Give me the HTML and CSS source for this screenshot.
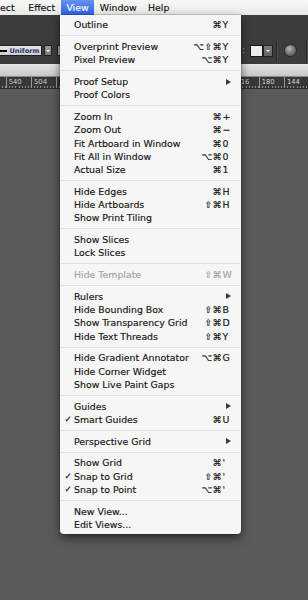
FILE: index.html
```html
<!DOCTYPE html>
<html>
<head>
<meta charset="utf-8">
<link rel="stylesheet" href="styles.css">
</head>
<body>
<div class="screen">
  <div class="menubar">
    <span class="mb-item first">ect</span>
    <span class="mb-item">Effect</span>
    <span class="mb-item active">View</span>
    <span class="mb-item">Window</span>
    <span class="mb-item">Help</span>
  </div>
  <div class="toolbar">
    <div class="ctl-row">
      <div class="combo"><span class="stroke-line"></span><span class="combo-text">Uniform</span></div>
      <div class="dd"><span class="dd-arrow"></span></div>
      <div class="combo2"></div>
      <div class="right-group">
        <span class="colon">:</span>
        <div class="swatch"></div>
        <div class="dd dd-dark"><span class="dd-arrow"></span></div>
        <div class="vdiv"></div>
        <div class="globe"></div>
        <div class="vdiv"></div>
      </div>
    </div>
  </div>
  <div class="tabstrip"></div>
  <div class="ruler">
    <span class="seg lead"></span>
    <span class="seg"><span class="lbl">540</span></span>
    <span class="seg"><span class="lbl">504</span></span>
    <span class="seg"></span>
    <span class="seg"></span>
    <span class="seg"></span>
    <span class="seg"></span>
    <span class="seg"></span>
    <span class="seg"></span>
    <span class="seg"></span>
    <span class="seg"><span class="lbl">216</span></span>
    <span class="seg"><span class="lbl">180</span></span>
    <span class="seg"><span class="lbl">144</span></span>
    <span class="seg"></span>
  </div>
  <div class="canvas"></div>

  <div class="menu">
    <div class="item"><span class="chk"></span><span class="lab">Outline</span><span class="sc"><span class="mods">⌘</span><span class="key">Y</span></span></div>
    <div class="sep"></div>
    <div class="item"><span class="chk"></span><span class="lab">Overprint Preview</span><span class="sc"><span class="mods">⌥⇧⌘</span><span class="key">Y</span></span></div>
    <div class="item"><span class="chk"></span><span class="lab">Pixel Preview</span><span class="sc"><span class="mods">⌥⌘</span><span class="key">Y</span></span></div>
    <div class="sep"></div>
    <div class="item"><span class="chk"></span><span class="lab">Proof Setup</span><span class="sub"></span></div>
    <div class="item"><span class="chk"></span><span class="lab">Proof Colors</span></div>
    <div class="sep"></div>
    <div class="item"><span class="chk"></span><span class="lab">Zoom In</span><span class="sc"><span class="mods">⌘</span><span class="key">+</span></span></div>
    <div class="item"><span class="chk"></span><span class="lab">Zoom Out</span><span class="sc"><span class="mods">⌘</span><span class="key">−</span></span></div>
    <div class="item"><span class="chk"></span><span class="lab">Fit Artboard in Window</span><span class="sc"><span class="mods">⌘</span><span class="key">0</span></span></div>
    <div class="item"><span class="chk"></span><span class="lab">Fit All in Window</span><span class="sc"><span class="mods">⌥⌘</span><span class="key">0</span></span></div>
    <div class="item"><span class="chk"></span><span class="lab">Actual Size</span><span class="sc"><span class="mods">⌘</span><span class="key">1</span></span></div>
    <div class="sep"></div>
    <div class="item"><span class="chk"></span><span class="lab">Hide Edges</span><span class="sc"><span class="mods">⌘</span><span class="key">H</span></span></div>
    <div class="item"><span class="chk"></span><span class="lab">Hide Artboards</span><span class="sc"><span class="mods">⇧⌘</span><span class="key">H</span></span></div>
    <div class="item"><span class="chk"></span><span class="lab">Show Print Tiling</span></div>
    <div class="sep"></div>
    <div class="item"><span class="chk"></span><span class="lab">Show Slices</span></div>
    <div class="item"><span class="chk"></span><span class="lab">Lock Slices</span></div>
    <div class="sep"></div>
    <div class="item disabled"><span class="chk"></span><span class="lab">Hide Template</span><span class="sc"><span class="mods">⇧⌘</span><span class="key">W</span></span></div>
    <div class="sep"></div>
    <div class="item"><span class="chk"></span><span class="lab">Rulers</span><span class="sub"></span></div>
    <div class="item"><span class="chk"></span><span class="lab">Hide Bounding Box</span><span class="sc"><span class="mods">⇧⌘</span><span class="key">B</span></span></div>
    <div class="item"><span class="chk"></span><span class="lab">Show Transparency Grid</span><span class="sc"><span class="mods">⇧⌘</span><span class="key">D</span></span></div>
    <div class="item"><span class="chk"></span><span class="lab">Hide Text Threads</span><span class="sc"><span class="mods">⇧⌘</span><span class="key">Y</span></span></div>
    <div class="sep"></div>
    <div class="item"><span class="chk"></span><span class="lab">Hide Gradient Annotator</span><span class="sc"><span class="mods">⌥⌘</span><span class="key">G</span></span></div>
    <div class="item"><span class="chk"></span><span class="lab">Hide Corner Widget</span></div>
    <div class="item"><span class="chk"></span><span class="lab">Show Live Paint Gaps</span></div>
    <div class="sep"></div>
    <div class="item"><span class="chk"></span><span class="lab">Guides</span><span class="sub"></span></div>
    <div class="item"><span class="chk">✓</span><span class="lab">Smart Guides</span><span class="sc"><span class="mods">⌘</span><span class="key">U</span></span></div>
    <div class="sep"></div>
    <div class="item"><span class="chk"></span><span class="lab">Perspective Grid</span><span class="sub"></span></div>
    <div class="sep"></div>
    <div class="item"><span class="chk"></span><span class="lab">Show Grid</span><span class="sc"><span class="mods">⌘</span><span class="key">'</span></span></div>
    <div class="item"><span class="chk">✓</span><span class="lab">Snap to Grid</span><span class="sc"><span class="mods">⇧⌘</span><span class="key">'</span></span></div>
    <div class="item"><span class="chk">✓</span><span class="lab">Snap to Point</span><span class="sc"><span class="mods">⌥⌘</span><span class="key">'</span></span></div>
    <div class="sep"></div>
    <div class="item"><span class="chk"></span><span class="lab">New View...</span></div>
    <div class="item"><span class="chk"></span><span class="lab">Edit Views...</span></div>
  </div>
</div>
</body>
</html>
```
FILE: styles.css
```css
html, body {
  margin: 0;
  padding: 0;
  background: #5a5a5a;
}
.screen {
  position: relative;
  width: 308px;
  height: 600px;
  overflow: hidden;
  display: flex;
  flex-direction: column;
  font-family: "DejaVu Sans", "Liberation Sans", sans-serif;
}
/* menu bar */
.menubar {
  height: 15.4px;
  flex: none;
  display: flex;
  align-items: stretch;
  background: linear-gradient(#f8f8f6, #e8e8e6);
  font-size: 9.4px;
  color: #111;
  -webkit-text-stroke: 0.15px currentColor;
}
.mb-item {
  display: flex;
  align-items: center;
  padding: 0 5.6px;
}
.mb-item.first { padding-left: 0; padding-right: 8px; }
.mb-item.active {
  background: linear-gradient(#6592f4, #2d62e2);
  color: #fff;
}
/* toolbar */
.toolbar {
  height: 48.9px;
  flex: none;
  background: #3c3c3c;
  display: flex;
  flex-direction: column;
  padding-top: 29.6px;
  box-sizing: border-box;
}
.ctl-row {
  height: 12px;
  display: flex;
  align-items: center;
}
.combo {
  width: 42px;
  height: 11px;
  box-sizing: border-box;
  background: linear-gradient(#e6e6e6, #cdcdcd);
  border: 1px solid #1e1e1e;
  border-left: none;
  display: flex;
  align-items: center;
}
.stroke-line {
  width: 7px;
  height: 1.6px;
  background: #000;
  margin-right: 2.5px;
}
.combo-text {
  font-size: 6.6px;
  font-weight: bold;
  color: #26366a;
}
.dd {
  width: 8px;
  height: 11px;
  margin-left: 2px;
  box-sizing: border-box;
  background: linear-gradient(#9a9a9a, #7a7a7a);
  border: 1px solid #222;
  display: flex;
  align-items: center;
  justify-content: center;
}
.dd-arrow {
  width: 0;
  height: 0;
  border-left: 2px solid transparent;
  border-right: 2px solid transparent;
  border-top: 2.5px solid #fff;
}
.combo2 {
  width: 10px;
  height: 11px;
  margin-left: 5px;
  background: #a8a8a8;
  border: 1px solid #222;
  box-sizing: border-box;
}
.right-group {
  margin-left: auto;
  display: flex;
  align-items: center;
  height: 24px;
}
.colon {
  color: #bbb;
  font-size: 8px;
  margin-right: 5px;
}
.swatch {
  width: 13px;
  height: 12px;
  box-sizing: border-box;
  background: #ececec;
  border: 1px solid #1a1a1a;
}
.dd-dark {
  width: 10px;
  height: 12px;
  margin-left: 0;
  background: linear-gradient(#7d7d7d, #626262);
}
.vdiv {
  width: 1px;
  height: 22px;
  background: #2a2a2a;
  border-right: 1px solid #4a4a4a;
  margin-left: 3px;
}
.globe {
  width: 11px;
  height: 11px;
  border-radius: 50%;
  margin-left: 7px;
  margin-right: 7px;
  background: radial-gradient(circle at 40% 35%, #b8b8b8 0, #7a7a7a 45%, #3a3a3a 100%);
  box-shadow: 0 0 0 1px #2c2c2c;
}
/* tab strip */
.tabstrip {
  height: 12.7px;
  flex: none;
  background: linear-gradient(#e6e6e6, #c8c8c8);
  border-bottom: 1px solid #8a8a8a;
  box-sizing: border-box;
}
/* ruler */
.ruler {
  height: 12px;
  flex: none;
  background: #373737;
  display: flex;
  overflow: hidden;
  border-bottom: 1px solid #2a2a2a;
  box-sizing: border-box;
}
.seg {
  flex: none;
  width: 25.3px;
  height: 100%;
  box-sizing: border-box;
  border-left: 1px solid #9a9a9a;
  position: relative;
  background-image: repeating-linear-gradient(to right, transparent 0 2.16px, #8a8a8a 2.16px 3.16px);
  background-size: 100% 2px;
  background-position: bottom left;
  background-repeat: no-repeat;
}
.seg.lead { margin-left: -19.6px; }
.lbl {
  position: absolute;
  left: 2px;
  top: 1px;
  font-size: 6.8px;
  color: #cfcfcf;
  font-family: "DejaVu Sans", sans-serif;
}
.canvas {
  flex: 1;
  background: #5a5a5a;
}
/* the dropdown menu */
.menu {
  position: absolute;
  left: 60px;
  top: 15.4px;
  width: 181px;
  box-sizing: border-box;
  padding: 2.8px 0 3.4px;
  background: #f6f6f6;
  border-radius: 0 0 4px 4px;
  box-shadow: 0 4px 10px rgba(0,0,0,0.55), 0 0 0 0.5px rgba(0,0,0,0.25);
  font-size: 9.4px;
  color: #141414;
  -webkit-text-stroke: 0.15px currentColor;
}
.item {
  height: 13.3px;
  display: flex;
  align-items: center;
  padding-right: 9px;
}
.item.disabled { color: #a3a3a3; }
.chk {
  width: 14px;
  flex: none;
  box-sizing: border-box;
  padding-left: 4.5px;
  font-size: 8.6px;
}
.lab {
  flex: 1;
  white-space: nowrap;
}
.sc {
  display: flex;
  align-items: center;
}
.mods {
  text-align: right;
  letter-spacing: 0.2px;
}
.key {
  width: 10px;
  text-align: left;
  padding-left: 0.6px;
  box-sizing: border-box;
}
.sub {
  width: 0;
  height: 0;
  border-top: 3px solid transparent;
  border-bottom: 3px solid transparent;
  border-left: 5px solid #3a3a3a;
  margin-right: 1px;
}
.sep {
  height: 8.4px;
  display: flex;
  align-items: center;
  padding: 0 1px;
}
.sep::before {
  content: "";
  flex: 1;
  height: 1px;
  background: #e0e0e0;
}
```
